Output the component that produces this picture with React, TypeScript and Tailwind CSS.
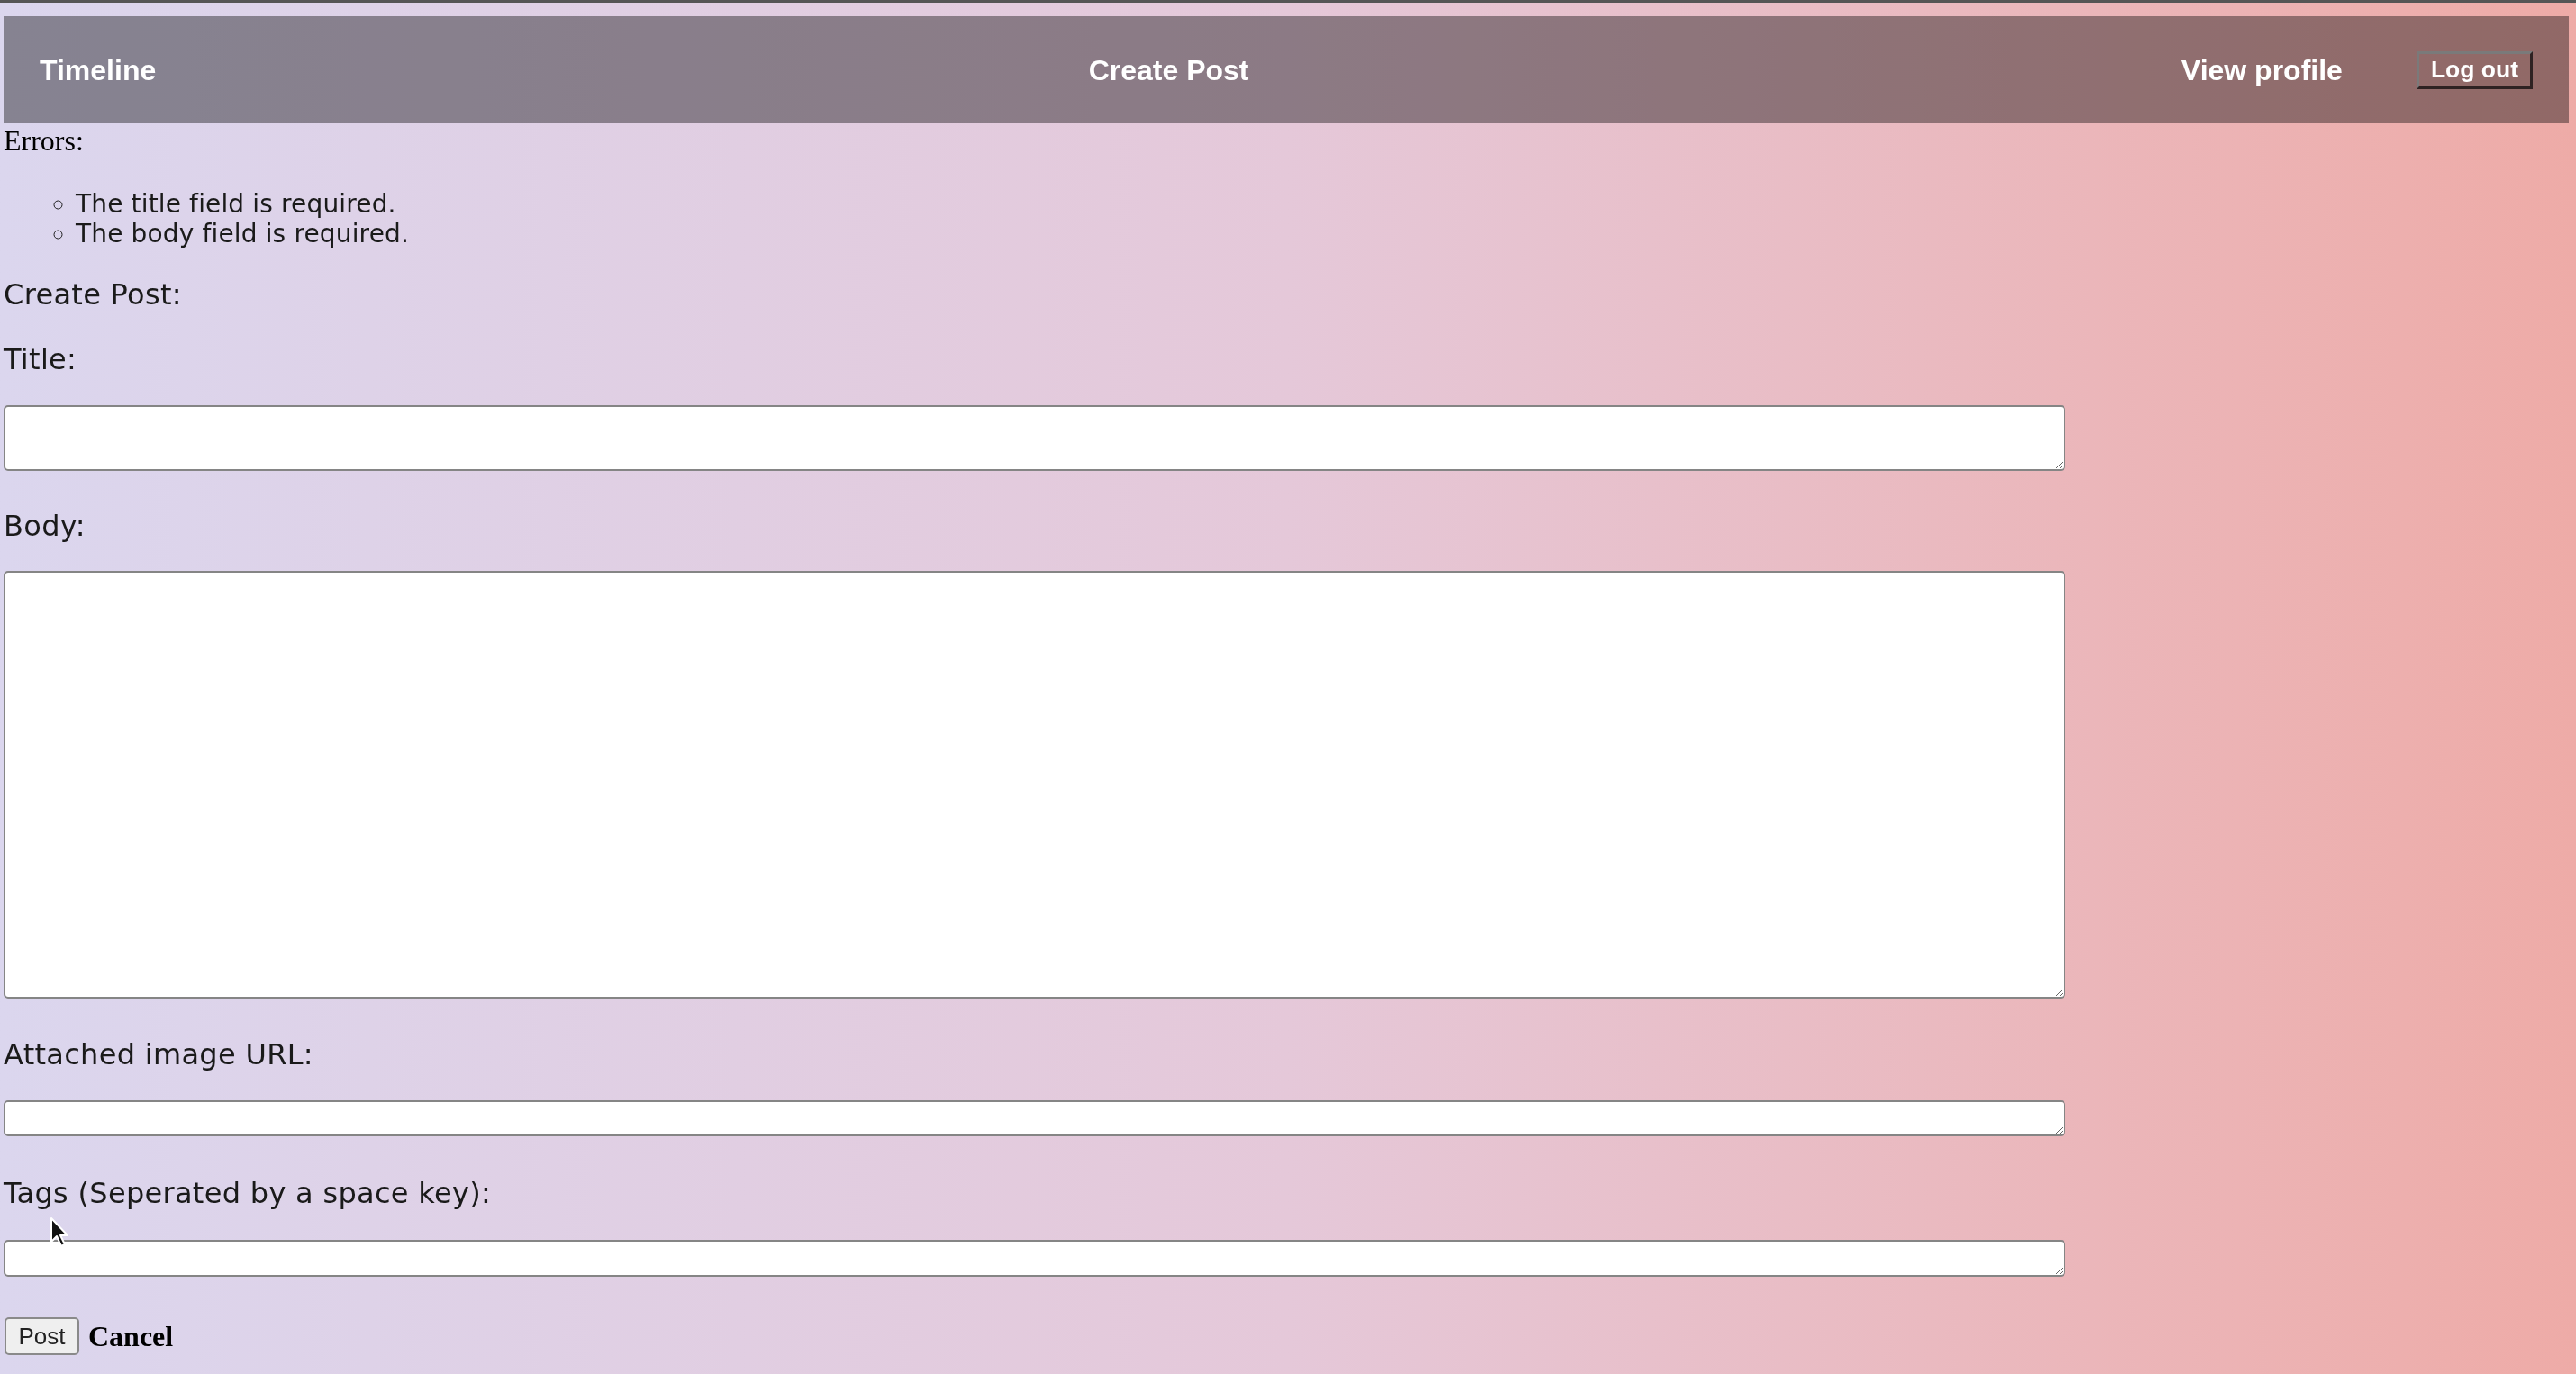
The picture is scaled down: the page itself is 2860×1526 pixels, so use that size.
export default function App() {
  return (
    <div className="relative min-h-screen border-t-[3px] border-[#555] bg-linear-to-r from-[#dbd6ee] via-[#e5c8d9] to-[#eeaba7] pl-[4px] pr-[8px] pb-[20px] font-['DejaVu_Sans',sans-serif] text-[#1a1a1a]">
      {/* Top nav */}
      <nav className="mt-[15px] flex h-[119px] items-center justify-between bg-black/[0.39] px-[40px] font-['Liberation_Sans',Arial,sans-serif] text-[32px] font-bold text-white">
        <a>Timeline</a>
        <a>Create Post</a>
        <div className="flex items-center gap-[82px]">
          <a>View profile</a>
          <button className="h-[42px] border-[3px] border-t-[#7a7a7a] border-l-[#7a7a7a] border-r-[#2e2222] border-b-[#2e2222] px-[13px] text-[26.5px] leading-none">
            Log out
          </button>
        </div>
      </nav>

      {/* Errors */}
      <div className="mt-[1px] font-['Liberation_Serif',serif] text-[32px] leading-[37px] text-black">Errors:</div>
      <ul className="mt-[35px] list-[circle] pl-[80px] text-[28px] leading-[33px] tracking-[0.15px]">
        <li>The title field is required.</li>
        <li>The body field is required.</li>
      </ul>

      {/* Form */}
      <form className="text-[32px] leading-[37px] tracking-[0.3px]">
        <p className="mt-[33px]">Create Post:</p>
        <p className="mt-[35px]">Title:</p>
        <textarea className="mt-[32px] block h-[73px] w-[2289px] rounded-[5px] border-2 border-[#858585] bg-white" />
        <p className="mt-[43px]">Body:</p>
        <textarea className="mt-[31px] block h-[475px] w-[2289px] rounded-[5px] border-2 border-[#858585] bg-white" />
        <p className="mt-[44px]">Attached image URL:</p>
        <textarea className="mt-[32px] block h-[40px] w-[2289px] rounded-[5px] border-2 border-[#858585] bg-white" />
        <p className="mt-[45px]">Tags (Seperated by a space key):</p>
        <textarea className="mt-[33px] block h-[41px] w-[2289px] rounded-[5px] border-2 border-[#858585] bg-white" />
        <div className="mt-[45px] flex items-center gap-[10px] tracking-normal">
          <button
            type="button"
            className="ml-px h-[42px] w-[83px] rounded-[5px] border-2 border-[#8a8a8a] bg-[#efefef] font-['Liberation_Sans',Arial,sans-serif] text-[26px] leading-none text-[#222]"
          >
            Post
          </button>
          <a className="font-['Liberation_Serif',serif] text-[32px] font-bold text-black">Cancel</a>
        </div>
      </form>

      {/* mouse pointer captured in the screenshot */}
      <svg className="absolute left-[55px] top-[1348px]" width="24" height="36" viewBox="0 0 24 36">
        <path d="M2 2 L2 28 L8 22 L13 33 L17 31 L12 21 L20 21 Z" fill="#111" stroke="#fff" strokeWidth="2" strokeLinejoin="round" />
      </svg>
    </div>
  );
}
